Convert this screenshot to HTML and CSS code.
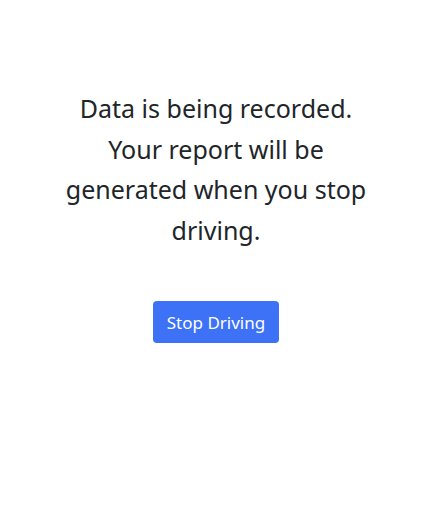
FILE: index.html
```html
<!DOCTYPE html>
<html lang="en">
<head>
<meta charset="utf-8">
<link rel="stylesheet" href="styles.css">
</head>
<body>
<main class="page">
  <p class="message">Data is being recorded. Your report will be generated when you stop driving.</p>
  <button class="btn-stop" type="button">Stop Driving</button>
</main>
</body>
</html>
```
FILE: styles.css
```css
html, body {
  margin: 0;
  padding: 0;
  background: #ffffff;
}
body {
  font-family: "Noto Sans", "Open Sans", sans-serif;
  color: #212529;
}
.page {
  display: flex;
  flex-direction: column;
  align-items: center;
  padding-top: 88px;
  padding-left: 5px;
}
.message {
  margin: 0;
  width: 310px;
  text-align: center;
  font-size: 25px;
  line-height: 40.5px;
}
.btn-stop {
  margin-top: 51px;
  height: 42px;
  width: 126px;
  padding: 0;
  border: none;
  border-radius: 4px;
  background: #3d71f6;
  color: #ffffff;
  font-family: "Noto Sans", "Open Sans", sans-serif;
  font-size: 17px;
}
```
